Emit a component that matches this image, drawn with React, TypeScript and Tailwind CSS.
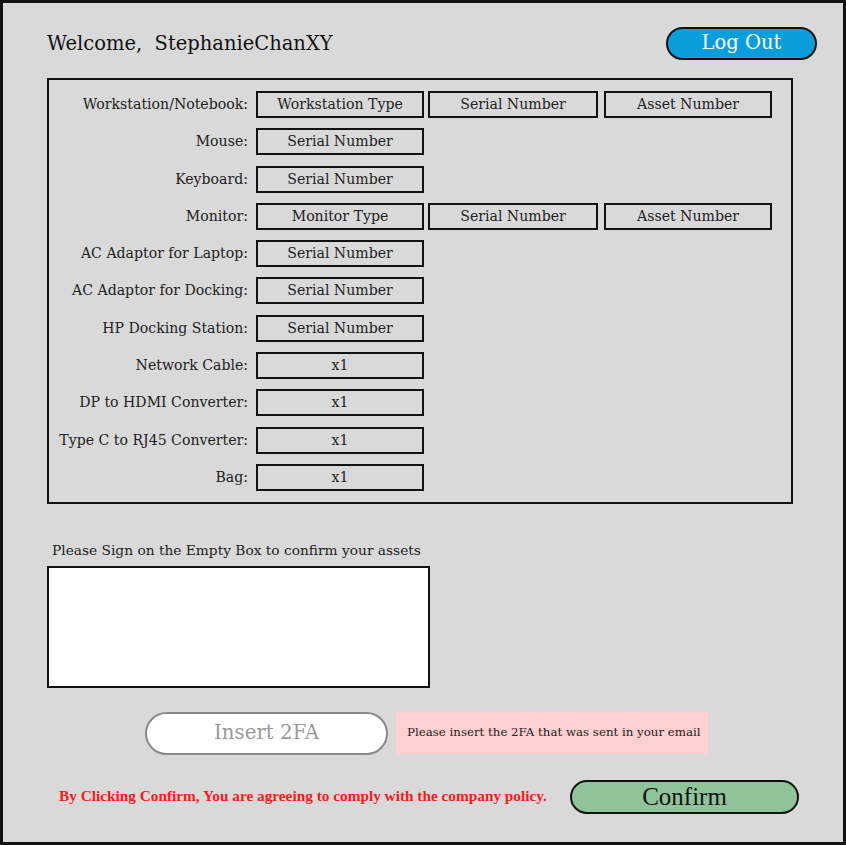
import React from "react";

type Row = { label: string; fields: string[] };

const rows: Row[] = [
  { label: "Workstation/Notebook:", fields: ["Workstation Type", "Serial Number", "Asset Number"] },
  { label: "Mouse:", fields: ["Serial Number"] },
  { label: "Keyboard:", fields: ["Serial Number"] },
  { label: "Monitor:", fields: ["Monitor Type", "Serial Number", "Asset Number"] },
  { label: "AC Adaptor for Laptop:", fields: ["Serial Number"] },
  { label: "AC Adaptor for Docking:", fields: ["Serial Number"] },
  { label: "HP Docking Station:", fields: ["Serial Number"] },
  { label: "Network Cable:", fields: ["x1"] },
  { label: "DP to HDMI Converter:", fields: ["x1"] },
  { label: "Type C to RJ45 Converter:", fields: ["x1"] },
  { label: "Bag:", fields: ["x1"] },
];

const fieldWidths = ["w-[168px]", "w-[170px]", "w-[168px]"];
const fieldGaps = ["ml-0", "ml-[4px]", "ml-[6px]"];

const AssetRow = ({ label, fields }: Row) => (
  <div className="flex h-[27px] items-center">
    <div className="w-[199px] whitespace-nowrap text-right text-[14.1px] text-[#222]">{label}</div>
    <div className="ml-[8px] flex h-full">
      {fields.map((f, i) => (
        <div
          key={i}
          className={`${fieldWidths[i]} ${fieldGaps[i]} flex h-full items-center justify-center border-2 border-[#111] text-[14.1px] text-[#222]`}
        >
          {f}
        </div>
      ))}
    </div>
  </div>
);

const App = () => {
  return (
    <div
      className="h-[845px] w-[846px] border-[3px] border-[#111] bg-[#d9d9d9]"
      style={{ fontFamily: '"DejaVu Serif", serif' }}
    >
      <div className="flex h-[33px] items-center justify-between pl-[44px] pr-[26px] mt-[24px]">
        <h1 className="text-[19.5px] text-[#111]">Welcome,&nbsp; StephanieChanXY</h1>
        <button
          type="button"
          className="flex h-[33px] w-[151px] items-center justify-center rounded-full border-2 border-[#111] bg-[#0a9ddb] pb-[2px] text-[19.5px] text-white"
        >
          Log Out
        </button>
      </div>

      <div className="ml-[44px] mt-[18px] flex w-[746px] flex-col gap-[10.3px] border-2 border-[#111] py-[11px]">
        {rows.map((r) => (
          <AssetRow key={r.label} {...r} />
        ))}
      </div>

      <p className="ml-[49px] mt-[36px] text-[13.75px] text-[#222]">
        Please Sign on the Empty Box to confirm your assets
      </p>
      <div className="ml-[44px] mt-[5px] h-[122px] w-[383px] border-2 border-[#111] bg-white" />

      <div className="ml-[142px] mt-[24px] flex items-center gap-[8px]">
        <div className="flex h-[43px] w-[243px] items-center justify-center rounded-full border-2 border-[#8a8a8a] bg-white text-[19.8px] text-[#9a9a9a]">
          Insert 2FA
        </div>
        <div className="flex h-[42px] w-[312px] items-center bg-[#ffd0d0] pl-[11px] text-[11.8px] text-[#222]">
          Please insert the 2FA that was sent in your email
        </div>
      </div>

      <div className="mt-[25px] flex items-center pl-[56px]">
        <p
          className="w-[511px] whitespace-nowrap text-[15.3px] font-bold text-[#ff1a1a]"
          style={{ fontFamily: '"Liberation Serif", serif' }}
        >
          By Clicking Confirm, You are agreeing to comply with the company policy.
        </p>
        <button
          type="button"
          className="flex h-[34px] w-[229px] items-center justify-center rounded-full border-2 border-[#111] bg-[#8fc49b] text-[25px] text-[#111]"
          style={{ fontFamily: '"Liberation Serif", serif' }}
        >
          Confirm
        </button>
      </div>
    </div>
  );
};

export default App;
